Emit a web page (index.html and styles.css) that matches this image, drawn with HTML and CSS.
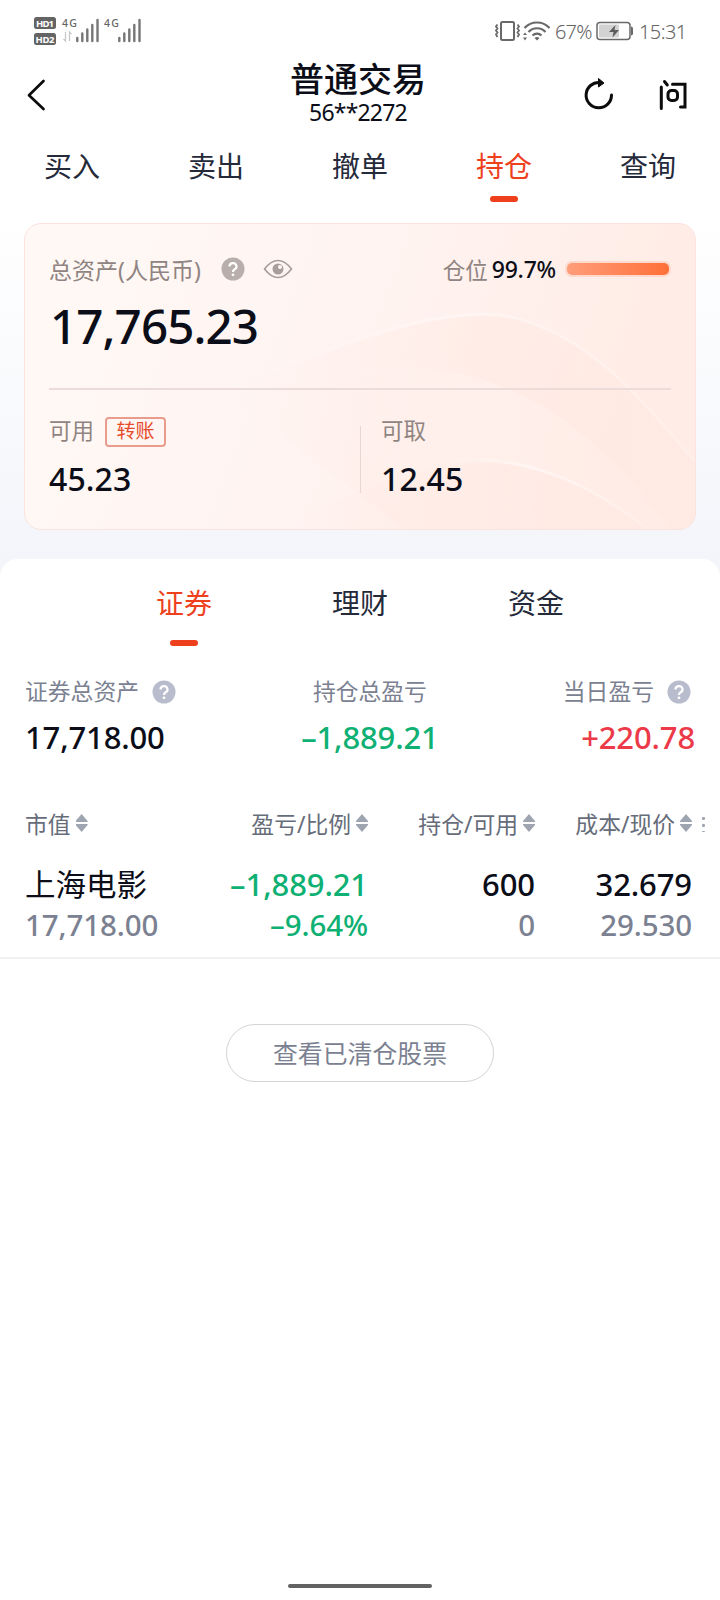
FILE: index.html
```html
<!DOCTYPE html>
<html lang="zh-CN">
<head>
  <meta charset="UTF-8">
  <meta name="viewport" content="width=device-width, initial-scale=1.0">
  <title>普通交易</title>
  <link rel="stylesheet" href="styles.css">
</head>
<body>
  <div class="top">
    <div class="status">
      <svg class="status-left" width="112" height="32" viewBox="0 0 112 32">
        <rect x="0" y="1" width="22" height="12" rx="2.5" fill="#646464"/>
        <rect x="0" y="17" width="22" height="12" rx="2.5" fill="#646464"/>
        <text class="hd" x="2" y="10.5" textLength="18">HD1</text>
        <text class="hd" x="1.5" y="26.5" textLength="19">HD2</text>
        <text class="net" x="28" y="11" textLength="15">4G</text>
        <text class="net" x="70" y="11" textLength="15">4G</text>
        <path d="M31.500 16v9l-2-2M35.500 25v-9l2 2" fill="none" stroke="#c9c9c9" stroke-width="1.300"/>
        <g stroke="#777" stroke-width="2.400" stroke-linecap="round">
          <path d="M43.300 22v3M48.300 17.500v7.500M53.300 13.500v11.500M58.300 9v16M63.500 4v21"/>
          <path d="M85.300 22v3M90.300 17.500v7.500M95.300 13.500v11.500M100.300 9v16M105.500 4v21"/>
        </g>
      </svg>
      <div class="status-right">
        <svg width="58" height="24" viewBox="0 0 58 24" fill="none" stroke="#696969">
          <rect x="6" y="3" width="13" height="18" rx="1.500" stroke-width="2"/>
          <path d="M2.500 5.500l-1.500 2 1.500 2-1.500 2 1.500 2-1.500 2 1.500 2.500M22.500 5.500l1.500 2-1.500 2 1.500 2-1.500 2 1.500 2-1.500 2.500" stroke-width="1.800"/>
          <path d="M29.500 9a17 17 0 0 1 25 0M33.500 13a11.500 11.500 0 0 1 17 0M37.500 16.500a6.500 6.500 0 0 1 9 0" stroke-width="2.200"/>
          <path d="M39.500 19q2.500-2 5 0l-2.500 2.500zM28 16l2-2.500 2 2.500zM28 18.500h4l-2 3z" fill="#696969" stroke="none"/>
        </svg>
        <span class="pct">67%</span>
        <svg class="battery" width="38" height="20" viewBox="0 0 38 20">
          <rect x="1" y="1.500" width="33" height="17" rx="3" fill="#fff" stroke="#696969" stroke-width="1.500"/>
          <rect x="3" y="3.500" width="20" height="13" rx="1" fill="#d2d2d2"/>
          <path d="M35 5.500q2 0 2 2v5q0 2-2 2z" fill="#696969"/>
          <path d="M19.500 4L13 11h4.500l-1 5.500L23 9h-4.500z" fill="#5c5c5c"/>
        </svg>
        <span class="clock">15:31</span>
      </div>
    </div>

    <header class="header">
      <svg class="back" width="20" height="32" viewBox="0 0 20 32"><path d="M16.500 2L2 16.200 16.500 30" fill="none" stroke="#0c0c0c" stroke-width="2.700" stroke-linecap="round" stroke-linejoin="round"/></svg>
      <div class="heading">
        <h1>普通交易</h1>
        <div class="account">56**2272</div>
      </div>
      <div class="actions">
        <svg width="32" height="34" viewBox="0 0 32 34"><path d="M17 4.500A12.700 12.700 0 1 0 28.500 17" fill="none" stroke="#0c0c0c" stroke-width="3" stroke-linecap="round"/><path d="M15.500 0.500L21 5 15.500 9z" fill="#0c0c0c" stroke="#0c0c0c" stroke-width="1" stroke-linejoin="round"/></svg>
        <svg width="30" height="32" viewBox="0 0 30 32" fill="none" stroke="#0c0c0c" stroke-width="3" stroke-linecap="round"><path d="M3.300 8v21.500M6.500 2.500l2.800 3.500M14.500 5.300H27v22.700h-4.500"/><rect x="10" y="11.500" width="9.500" height="10" rx="3.500"/></svg>
      </div>
    </header>

    <nav class="tabs">
      <a>买入</a>
      <a>卖出</a>
      <a>撤单</a>
      <a class="active">持仓</a>
      <a>查询</a>
    </nav>

    <section class="card">
      <svg class="waves" width="670" height="305" viewBox="0 0 670 305" preserveAspectRatio="none">
        <defs>
          <linearGradient id="w1" x1="0" y1="0" x2="1" y2="0">
            <stop offset="0" stop-color="#ffe6de" stop-opacity="0"/>
            <stop offset=".6" stop-color="#ffe6de" stop-opacity=".4"/>
            <stop offset="1" stop-color="#ffe6de" stop-opacity=".3"/>
          </linearGradient>
          <linearGradient id="w2" x1="0" y1="0" x2="1" y2="0">
            <stop offset="0" stop-color="#fff" stop-opacity="0"/>
            <stop offset=".5" stop-color="#fff" stop-opacity=".4"/>
            <stop offset="1" stop-color="#fff" stop-opacity=".15"/>
          </linearGradient>
        </defs>
        <path d="M200 170C330 110 430 80 490 94C570 115 620 180 670 238V305H380Z" fill="url(#w1)"/>
        <path d="M200 170C330 110 430 80 490 94C570 115 620 180 670 238" fill="none" stroke="url(#w2)" stroke-width="3"/>
        <path d="M300 150C460 120 560 190 645 305H380Z" fill="url(#w2)" fill-opacity=".5"/>
        <path d="M250 305C340 260 440 225 500 244C550 256 590 280 622 305Z" fill="url(#w1)"/>
        <path d="M400 238C490 225 560 255 622 305" fill="none" stroke="url(#w2)" stroke-width="3"/>
      </svg>
      <div class="card-head">
        <span class="card-label">总资产(人民币)</span>
        <svg class="help" width="24" height="24" viewBox="0 0 24 24"><circle cx="12" cy="12" r="11.500" fill="#b8aeab"/><path d="M8.500 9.500a3.500 3.300 0 1 1 5.200 2.800q-1.700 1-1.700 2.700" fill="none" stroke="#fff" stroke-width="2.200"/><circle cx="12" cy="17.800" r="1.400" fill="#fff"/></svg>
        <svg class="eye" width="30" height="20" viewBox="0 0 30 20"><path d="M1.500 10Q8 1.500 15 1.500T28.500 10Q22 18.500 15 18.500T1.500 10z" fill="none" stroke="#a89e9b" stroke-width="1.700" stroke-linejoin="round"/><circle cx="15" cy="10" r="5.500" fill="#a89e9b"/><circle cx="17" cy="8" r="2" fill="#fff6f3"/></svg>
        <div class="position">
          <span class="card-label">仓位</span>
          <b>99.7%</b>
          <i class="meter"></i>
        </div>
      </div>
      <div class="total">17,765.23</div>
      <div class="card-foot">
        <div class="cash">
          <div class="cash-label">可用<a class="transfer">转账</a></div>
          <div class="cash-value">45.23</div>
        </div>
        <div class="cash cash-out">
          <div class="cash-label">可取</div>
          <div class="cash-value">12.45</div>
        </div>
      </div>
    </section>
  </div>

  <main class="panel">
    <nav class="tabs sub-tabs">
      <a class="active">证券</a>
      <a>理财</a>
      <a>资金</a>
    </nav>

    <div class="stats">
      <div class="stat">
        <div class="stat-label">证券总资产<svg class="help" width="24" height="24" viewBox="0 0 24 24"><circle cx="12" cy="12" r="11.500" fill="#b9bccc"/><path d="M8.500 9.500a3.500 3.300 0 1 1 5.200 2.800q-1.700 1-1.700 2.700" fill="none" stroke="#fff" stroke-width="2.200"/><circle cx="12" cy="17.800" r="1.400" fill="#fff"/></svg></div>
        <div class="stat-value">17,718.00</div>
      </div>
      <div class="stat">
        <div class="stat-label">持仓总盈亏</div>
        <div class="stat-value down">–1,889.21</div>
      </div>
      <div class="stat">
        <div class="stat-label">当日盈亏<svg class="help" width="24" height="24" viewBox="0 0 24 24"><circle cx="12" cy="12" r="11.500" fill="#b9bccc"/><path d="M8.500 9.500a3.500 3.300 0 1 1 5.200 2.800q-1.700 1-1.700 2.700" fill="none" stroke="#fff" stroke-width="2.200"/><circle cx="12" cy="17.800" r="1.400" fill="#fff"/></svg></div>
        <div class="stat-value up">+220.78</div>
      </div>
    </div>

    <div class="grid grid-head">
      <div>市值<i class="sort"></i></div>
      <div>盈亏/比例<i class="sort"></i></div>
      <div>持仓/可用<i class="sort"></i></div>
      <div>成本/现价<i class="sort"></i><i class="more"></i></div>
    </div>
    <div class="grid holding">
      <div><p class="name">上海电影</p><p class="sub">17,718.00</p></div>
      <div class="down"><p>–1,889.21</p><p class="rate">–9.64%</p></div>
      <div><p>600</p><p class="sub">0</p></div>
      <div><p>32.679</p><p class="sub">29.530</p></div>
    </div>

    <a class="cleared">查看已清仓股票</a>
  </main>
  <div class="home-bar"></div>
</body>
</html>
```

FILE: styles.css
```css
:root { --accent:#ee401d; --ink:#0b0e18; --text:#252a3a; --muted:#7b8191; --green:#0eb073; --red:#ec3a48; }
*{box-sizing:border-box;}
body{margin:0;height:1600px;display:flex;flex-direction:column;background:#fff;color:var(--ink);font-family:'Noto Sans','Noto Sans CJK SC',sans-serif;}
h1,p{margin:0;}
svg{display:block;flex:none;}

/* top area */
.top{height:577px;padding:0 24px;background:linear-gradient(#fff 210px,#f3f5fa 560px);}
.status{height:60px;margin:0 -24px;padding:16px 32px 0 34px;display:flex;justify-content:space-between;}
.hd{font-size:9.5px;font-weight:700;fill:#fff;}
.net{font-size:10.5px;font-weight:500;fill:#666;}
.status-right{display:flex;height:30px;align-items:center;color:#666;font-size:20px;font-weight:350;}
.pct{margin-left:2px;width:36px;letter-spacing:-.8px;}
.battery{margin-left:5px;}
.clock{margin-left:5px;width:49px;letter-spacing:-.6px;}

.header{height:70px;display:flex;justify-content:space-between;align-items:center;}
.back{margin-left:3px;}
.heading{width:200px;margin-left:86px;margin-bottom:5px;text-align:center;}
h1{font-size:34px;line-height:38px;font-weight:500;}
.account{font-size:23px;line-height:28px;letter-spacing:-.8px;}
.actions{width:105px;display:flex;justify-content:space-between;align-items:center;margin-right:8px;}

.tabs{display:flex;height:93px;margin:0 -24px;padding-top:14px;}
.tabs a{flex:1;font-size:28px;line-height:44px;text-align:center;color:var(--text);}
.tabs .active{color:var(--accent);}
.tabs .active::after{content:'';display:block;width:28px;height:6px;margin:8px auto 0;border-radius:3px;background:var(--accent);}

/* asset card */
.card{position:relative;height:307px;padding:27px 24px 0;border:1px solid #fce3dd;border-radius:17px;background:linear-gradient(110deg,#fff8f5 10%,#fff3f0 50%,#ffece6 85%);overflow:hidden;}
.waves{position:absolute;left:0;top:0;}
.card > div{position:relative;}
.card-head{display:flex;align-items:center;height:36px;}
.card-label,.cash-label{font-size:22.5px;color:#8f8481;}
.card-head > .card-label{font-size:23px;}
.card-head .help{margin-left:20px;}
.eye{margin-left:18px;}
.position{display:flex;align-items:center;margin-left:auto;margin-right:2px;}
.position b{margin-left:4px;font-size:23px;font-weight:500;letter-spacing:-.2px;}
.meter{width:102px;height:12px;margin-left:11px;border-radius:5px;background:linear-gradient(90deg,#ff9d7a,#ff7038);box-shadow:0 0 0 2px #ffd9cb;}
.total{height:103px;padding:7px 0 0 1px;border-bottom:2px solid #ecdcd9;font-size:47.5px;line-height:64px;font-weight:500;letter-spacing:-.9px;}
.card-foot{display:flex;padding-top:25px;}
.cash{width:311px;}
.cash-label{display:flex;line-height:32px;height:36px;}
.transfer{margin-left:11px;margin-top:2px;width:61px;height:30px;border:2px solid #e99c8c;border-radius:4px;font-size:19px;line-height:25px;text-align:center;color:#e64c2c;}
.cash-value{font-size:32px;line-height:44px;margin-top:6px;font-weight:500;letter-spacing:.1px;}
.cash-out{position:relative;padding-left:21px;}
.cash-out::before{content:'';position:absolute;left:0;top:11px;width:1px;height:67px;background:#e6d7d4;}

/* holdings */
.panel{flex:1;margin-top:-18px;border-radius:18px 18px 0 0;background:#fff;}
.sub-tabs{height:111px;margin:0;padding:22px 96px 0;}
.sub-tabs .active::after{margin-top:15px;}
.stats{display:flex;height:127px;padding:6px 25px 0;justify-content:space-between;}
.stat-label{display:flex;font-size:22.8px;line-height:32px;align-items:center;color:var(--muted);}
.stat-label .help{margin:0 4px 0 13px;}
.stat-value{margin-top:7px;font-size:31px;line-height:44px;font-weight:500;letter-spacing:-.15px;white-space:nowrap;}
.stat:nth-child(2){margin-left:-3px;}
.stat:nth-child(2) .stat-label{justify-content:center;}
.stat:last-child{text-align:right;}
.stat:last-child .stat-label{justify-content:flex-end;}
.down{color:var(--green);}
.up{color:var(--red);}

.grid{display:grid;grid-template-columns:150px 193px 167px 157px;padding-left:25px;}
.grid > div{text-align:right;}
.grid > div:first-child{text-align:left;}
.grid-head{height:65px;padding-top:10px;}
.grid-head > div{display:flex;align-items:center;justify-content:flex-end;height:32px;font-size:22.8px;color:#666c7a;white-space:nowrap;}
.grid-head > div:first-child{justify-content:flex-start;}
.sort{width:12px;height:18px;margin-left:5px;background:#9ea4b0;clip-path:polygon(50% 0,100% 7px,100% 8px,0 8px,0 7px,50% 0,50% 18px,0 11px,0 10px,100% 10px,100% 11px,50% 18px);}
.more{width:3px;height:17px;margin:0 -13px 0 10px;background:radial-gradient(circle,#9ea4b0 1.3px,transparent 1.7px) 0 0/3px 7px;}
.holding{height:97px;border-bottom:2px solid #f1f1f3;}
.holding p{height:40px;font-size:31px;line-height:45px;font-weight:500;letter-spacing:-.1px;}
.holding .name{font-size:30.5px;font-weight:400;letter-spacing:0;}
.holding .sub{font-size:29.5px;color:var(--muted);}
.holding .rate{font-size:29.5px;}
.cleared{display:block;width:268px;height:58px;margin:65px auto 0;border:1px solid #d3d4d8;border-radius:30px;font-size:24.9px;line-height:56px;text-align:center;color:var(--muted);}
.home-bar{width:144px;height:4px;margin:0 auto 12px;border-radius:2px;background:#626262;}
```
